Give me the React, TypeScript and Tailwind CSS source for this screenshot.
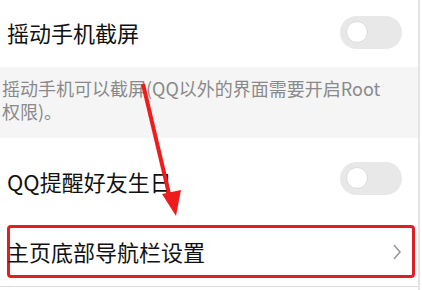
import React from 'react';

function Toggle() {
  return (
    <div className="w-[62px] h-[33px] rounded-full bg-[#e8e8e8] flex items-center px-[6px]">
      <div className="w-[22px] h-[22px] rounded-full bg-white border border-[#dcdcdc]" />
    </div>
  );
}

export default function App() {
  return (
    <div
      className="relative w-[422px] h-[290px] bg-white overflow-hidden"
      style={{ fontFamily: '"Noto Sans CJK SC", "Noto Sans", sans-serif' }}
    >
      <div className="w-[420px] h-full border-r-2 border-[#e4e4e4]">
        {/* Shake to screenshot */}
        <div className="h-[67px] flex items-center justify-between pl-[7px] pr-[16px]">
          <span className="text-[22px] text-[#111] pb-[3px]">摇动手机截屏</span>
          <div className="mt-[-3px]">
            <Toggle />
          </div>
        </div>

        {/* Description */}
        <div className="h-[71px] bg-[#f5f5f5] pl-[2px] pr-[20px] pt-[10px] text-[18px] leading-[23px] text-[#8a8a8a]">
          摇动手机可以截屏(QQ以外的界面需要开启Root权限)。
        </div>

        {/* Birthday reminder */}
        <div className="h-[80px] flex items-center justify-between pl-[7px] pr-[16px]">
          <span className="text-[22px] text-[#111] mt-[6px]">QQ提醒好友生日</span>
          <Toggle />
        </div>

        {/* Bottom nav setting */}
        <div className="mt-[7px] ml-[7px] mr-[3px] h-[53px] border-[3px] border-[#e02020] rounded-[4px] flex items-center justify-between pr-[10px]">
          <span className="text-[22px] text-[#111] ml-[-3px]">主页底部导航栏设置</span>
          <svg width="10" height="18" viewBox="0 0 10 18" fill="none">
            <polyline points="2,2 8,9 2,16" stroke="#9a9a9a" strokeWidth="1.6" />
          </svg>
        </div>

        <div className="mt-[8px] h-px bg-[#dedede]" />
      </div>

      {/* Red annotation arrow */}
      <svg className="absolute left-0 top-0 pointer-events-none" width="422" height="290">
        <line x1="143" y1="84" x2="170" y2="198" stroke="#ee1c1c" strokeWidth="4" />
        <polygon points="176,216 162,194 181,190" fill="#ee1c1c" />
      </svg>
    </div>
  );
}
